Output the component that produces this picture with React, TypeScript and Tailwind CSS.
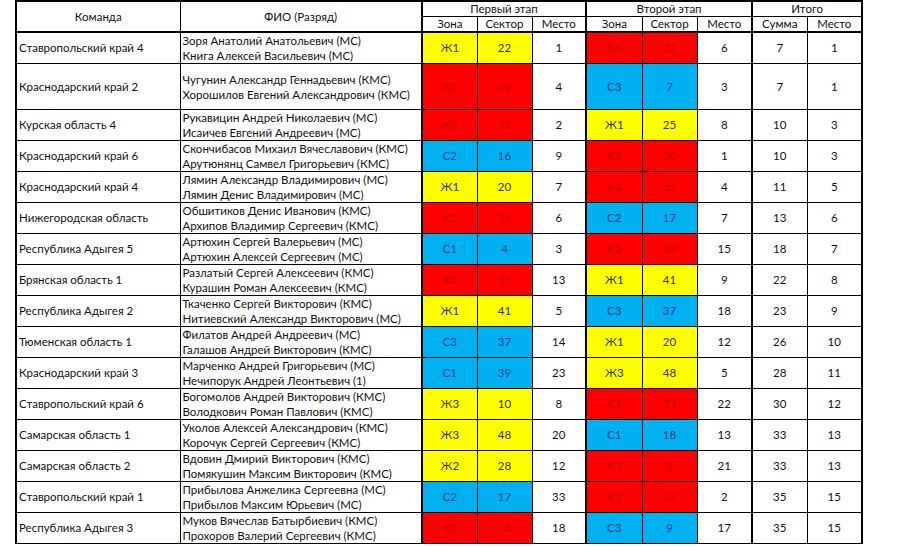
import React from "react";

type Row = {
  team: string;
  p1: string;
  p2: string;
  s1: [string, string, string];
  s2: [string, string, string];
  sum: string;
  place: string;
};

const rows: Row[] = [
  { team: "Ставропольский край 4", p1: "Зоря Анатолий Анатольевич (МС)", p2: "Книга Алексей Васильевич (МС)", s1: ["Ж1", "22", "1"], s2: ["К3", "31", "6"], sum: "7", place: "1" },
  { team: "Краснодарский край 2", p1: "Чугунин Александр Геннадьевич (КМС)", p2: "Хорошилов Евгений Александрович (КМС)", s1: ["К1", "52", "4"], s2: ["С3", "7", "3"], sum: "7", place: "1" },
  { team: "Курская область 4", p1: "Рукавицин Андрей Николаевич (МС)", p2: "Исаичев Евгений Андреевич (МС)", s1: ["К3", "35", "2"], s2: ["Ж1", "25", "8"], sum: "10", place: "3" },
  { team: "Краснодарский край 6", p1: "Скончибасов Михаил Вячеславович (КМС)", p2: "Арутюнянц Самвел Григорьевич (КМС)", s1: ["С2", "16", "9"], s2: ["К3", "30", "1"], sum: "10", place: "3" },
  { team: "Краснодарский край 4", p1: "Лямин Александр Владимирович (МС)", p2: "Лямин Денис Владимирович (МС)", s1: ["Ж1", "20", "7"], s2: ["К3", "35", "4"], sum: "11", place: "5" },
  { team: "Нижегородская область", p1: "Обшитиков Денис Иванович (КМС)", p2: "Архипов Владимир Сергеевич (КМС)", s1: ["К3", "24", "6"], s2: ["С2", "17", "7"], sum: "13", place: "6" },
  { team: "Республика Адыгея 5", p1: "Артюхин Сергей Валерьевич (МС)", p2: "Артюхин Алексей Сергеевич (МС)", s1: ["С1", "4", "3"], s2: ["К2", "23", "15"], sum: "18", place: "7" },
  { team: "Брянская область 1", p1: "Разлатый Сергей Алексеевич (КМС)", p2: "Курашин Роман Алексеевич (КМС)", s1: ["К2", "51", "13"], s2: ["Ж1", "41", "9"], sum: "22", place: "8" },
  { team: "Республика Адыгея 2", p1: "Ткаченко Сергей Викторович (КМС)", p2: "Нитиевский Александр Викторович (МС)", s1: ["Ж1", "41", "5"], s2: ["С3", "37", "18"], sum: "23", place: "9" },
  { team: "Тюменская область 1", p1: "Филатов Андрей Андреевич (МС)", p2: "Галашов Андрей Викторович (КМС)", s1: ["С3", "37", "14"], s2: ["Ж1", "20", "12"], sum: "26", place: "10" },
  { team: "Краснодарский край 3", p1: "Марченко Андрей Григорьевич (МС)", p2: "Нечипорук Андрей Леонтьевич (1)", s1: ["С1", "39", "23"], s2: ["Ж3", "48", "5"], sum: "28", place: "11" },
  { team: "Ставропольский край 6", p1: "Богомолов Андрей Викторович (КМС)", p2: "Володкович Роман Павлович (КМС)", s1: ["Ж3", "10", "8"], s2: ["К1", "52", "22"], sum: "30", place: "12" },
  { team: "Самарская область 1", p1: "Уколов Алексей Александрович (КМС)", p2: "Корочук Сергей Сергеевич (КМС)", s1: ["Ж3", "48", "20"], s2: ["С1", "18", "13"], sum: "33", place: "13" },
  { team: "Самарская область 2", p1: "Вдовин Дмирий Викторович (КМС)", p2: "Помякушин Максим Викторович (КМС)", s1: ["Ж2", "28", "12"], s2: ["К3", "1", "21"], sum: "33", place: "13" },
  { team: "Ставропольский край 1", p1: "Прибылова Анжелика Сергеевна (МС)", p2: "Прибылов Максим Юрьевич (МС)", s1: ["С2", "17", "33"], s2: ["К1", "32", "2"], sum: "35", place: "15" },
  { team: "Республика Адыгея 3", p1: "Муков Вячеслав Батырбиевич (КМС)", p2: "Прохоров Валерий Сергеевич (КМС)", s1: ["К2", "15", "18"], s2: ["С3", "9", "17"], sum: "35", place: "15" },
];

function zoneClass(zone: string): string {
  const c = zone.charAt(0);
  if (c === "Ж") return "bg-[#ffff00] text-[#333300]";
  if (c === "К") return "bg-[#ff0000] text-[#c00000]";
  return "bg-[#00b0f0] text-[#1f3f8a]";
}

const cell = "border border-black text-center align-middle p-0";

export default function App() {
  return (
    <div className="w-[900px] h-[546px] bg-white overflow-hidden font-['Lato','Liberation_Sans',sans-serif] text-[11.5px] text-[#111]">
      <table className="ml-[15px] w-[848px] table-fixed border-collapse">
        <colgroup>
          <col className="w-[164px]" />
          <col className="w-[242px]" />
          <col className="w-[55px]" />
          <col className="w-[55px]" />
          <col className="w-[54px]" />
          <col className="w-[56px]" />
          <col className="w-[55px]" />
          <col className="w-[55px]" />
          <col className="w-[55px]" />
          <col className="w-[55px]" />
        </colgroup>
        <thead>
          <tr className="h-[15px] leading-[13px]">
            <th rowSpan={2} className={`${cell} font-normal border-l-2 border-t-2 border-b-2`}>Команда</th>
            <th rowSpan={2} className={`${cell} font-normal border-t-2 border-b-2 border-r-2`}>ФИО (Разряд)</th>
            <th colSpan={3} className={`${cell} font-normal border-t-2 border-r-2`}>Первый этап</th>
            <th colSpan={3} className={`${cell} font-normal border-t-2 border-r-2`}>Второй этап</th>
            <th colSpan={2} className={`${cell} font-normal border-t-2 border-r-2`}>Итого</th>
          </tr>
          <tr className="h-[16px] leading-[13px]">
            <th className={`${cell} font-normal border-b-2`}>Зона</th>
            <th className={`${cell} font-normal border-b-2`}>Сектор</th>
            <th className={`${cell} font-normal border-b-2 border-r-2`}>Место</th>
            <th className={`${cell} font-normal border-b-2`}>Зона</th>
            <th className={`${cell} font-normal border-b-2`}>Сектор</th>
            <th className={`${cell} font-normal border-b-2 border-r-2`}>Место</th>
            <th className={`${cell} font-normal border-b-2`}>Сумма</th>
            <th className={`${cell} font-normal border-b-2 border-r-2`}>Место</th>
          </tr>
        </thead>
        <tbody>
          {rows.map((r, i) => (
            <tr key={i} className={i === 1 ? "h-[46px]" : "h-[31px]"}>
              <td className={`${cell} border-l-2 text-left pl-[2px]`}>{r.team}</td>
              <td className={`${cell} border-r-2 text-left pl-[2px] leading-[15px]`}>
                <div>{r.p1}</div>
                <div>{r.p2}</div>
              </td>
              <td className={`${cell} ${zoneClass(r.s1[0])}`}>{r.s1[0]}</td>
              <td className={`${cell} ${zoneClass(r.s1[0])}`}>{r.s1[1]}</td>
              <td className={`${cell} border-r-2`}>{r.s1[2]}</td>
              <td className={`${cell} ${zoneClass(r.s2[0])}`}>{r.s2[0]}</td>
              <td className={`${cell} ${zoneClass(r.s2[0])}`}>{r.s2[1]}</td>
              <td className={`${cell} border-r-2`}>{r.s2[2]}</td>
              <td className={`${cell}`}>{r.sum}</td>
              <td className={`${cell} border-r-2`}>{r.place}</td>
            </tr>
          ))}
        </tbody>
      </table>
    </div>
  );
}
